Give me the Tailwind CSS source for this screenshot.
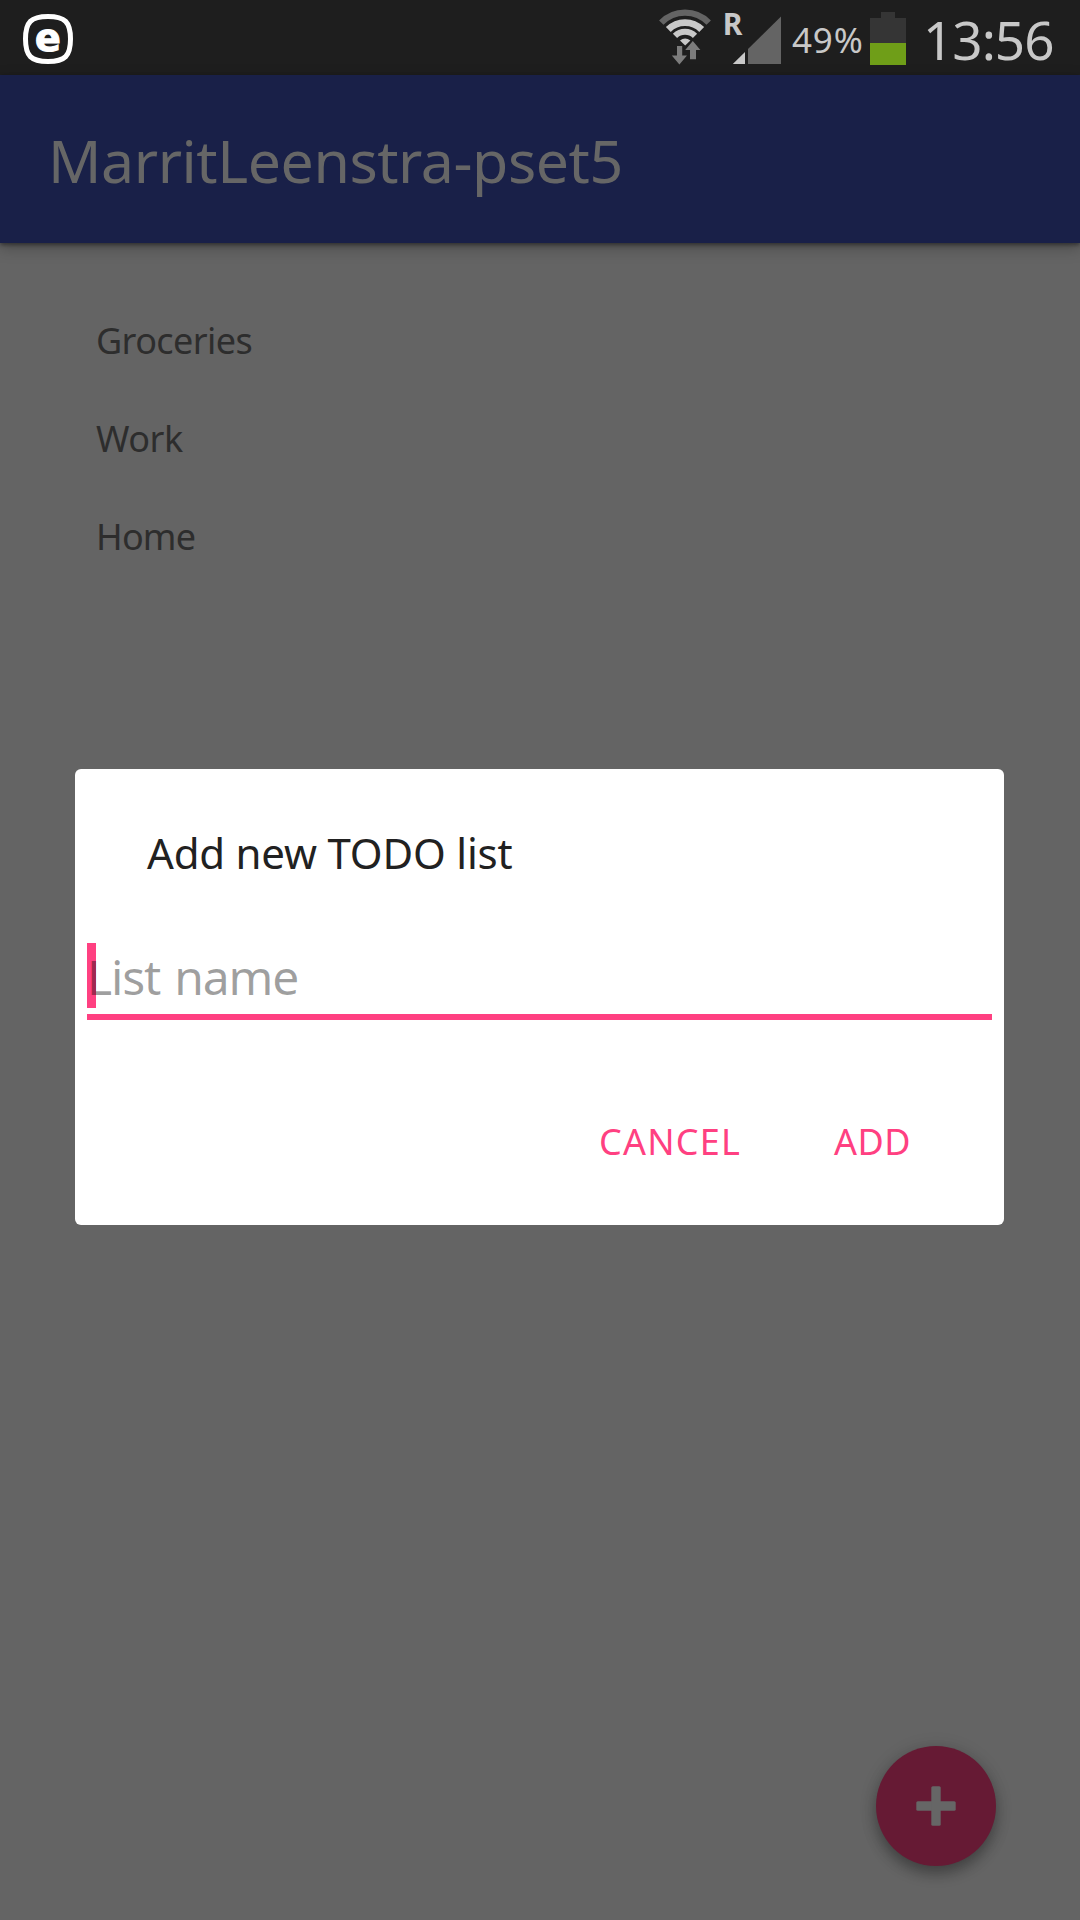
<!DOCTYPE html>
<html lang="en">
<head>
<meta charset="utf-8">
<title>MarritLeenstra-pset5</title>
<script src="https://cdn.jsdelivr.net/npm/@tailwindcss/browser@4"></script>
</head>
<body class="bg-[#646464] font-['Noto_Sans',sans-serif]">
<div class="relative flex h-[1920px] w-[1080px] flex-col overflow-hidden bg-[#646464]">

  <!-- Status bar -->
  <header class="flex h-[75px] shrink-0 items-start bg-[#1e1e1e] text-[#c8c8c8]">
    <svg class="ml-[23px] mt-[14px] h-[50px] w-[50px]" viewBox="0 0 50 50">
      <path d="M25 2.500C42 2.500 47.500 8 47.500 25S42 47.500 25 47.500 2.500 42 2.500 25 8 2.500 25 2.500Z" fill="none" stroke="#fff" stroke-width="5"/>
      <text x="24.800" y="36.800" text-anchor="middle" font-family="DejaVu Sans" font-weight="bold" font-size="38" fill="#fff" stroke="#fff" stroke-width="1.200">e</text>
    </svg>
    <svg class="ml-[583px] h-[75px] w-[130px]" viewBox="656 0 130 75">
      <!-- Wi-Fi arcs around (685, 46) -->
      <g fill="none">
        <path d="M661.300 22.700A33 33 0 0 1 708.700 22.700" stroke="#646464" stroke-width="6.200"/>
        <path d="M668.300 29.500A23.500 23.500 0 0 1 701.700 29.500" stroke="#c8c8c8" stroke-width="6.800"/>
        <path d="M675 35.900A14.200 14.200 0 0 1 695 35.900" stroke="#c8c8c8" stroke-width="6"/>
      </g>
      <path d="M680 40.500Q685 36.400 690.400 40.500L685.200 45.600Z" fill="#c8c8c8"/>
      <path d="M677 46h5.200v9.500h4.800L679.400 64.500 671.800 55.500H677Z" fill="#7c7c7c"/>
      <path d="M690 59.200V50h-4.800L692.800 41 700.400 50H696v9.200Z" fill="#7c7c7c"/>
      <text x="722.800" y="34.800" font-family="Noto Sans" font-weight="bold" font-size="30" fill="#c8c8c8">R</text>
      <path d="M745 52v12h-12.200Z" fill="#c8c8c8"/>
      <path d="M781 16.500V64h-33V49Z" fill="#646464"/>
    </svg>
    <span class="ml-[6px] mt-[2px] w-[78px] text-[35px] leading-[75px] tracking-[0.8px]">49%</span>
    <svg class="mt-[12px] h-[53px] w-[36px]" viewBox="0 0 36 53">
      <path d="M11 0h14v6h11v25H0V6h11Z" fill="#353535"/>
      <path d="M0 31h36v22H0Z" fill="#6f9e18"/>
    </svg>
    <span class="ml-[17px] mt-[2px] text-[53px] leading-[75px] tracking-[-1px]">13:56</span>
  </header>

  <!-- App bar -->
  <div class="flex h-[168px] shrink-0 items-center bg-[#192048] pl-12 shadow-[0_2px_4px_rgba(0,0,0,0.4),0_5px_14px_rgba(0,0,0,0.25)]">
    <h1 class="pt-[2px] text-[59px] leading-none tracking-[-0.44px] text-[#666666]">MarritLeenstra-pset5</h1>
  </div>

  <ul class="flex flex-col pl-24 pt-[49px] text-[36px] leading-[98px] text-[#2d2d2d]">
    <li class="tracking-[-0.6px]">Groceries</li>
    <li class="tracking-[-0.5px]">Work</li>
    <li class="tracking-[-0.8px]">Home</li>
  </ul>

  <!-- Floating action button -->
  <button class="absolute bottom-[54px] right-[84px] flex size-[120px] items-center justify-center rounded-full bg-[#661a34] shadow-[0_8px_14px_rgba(0,0,0,0.28),0_2px_18px_rgba(0,0,0,0.14)]">
    <svg class="size-10" viewBox="0 0 40 40" fill="#666666">
      <rect x="0.300" y="15.300" width="39.400" height="9.400" rx="1.500"/>
      <rect x="15.300" y="0.300" width="9.400" height="39.400" rx="1.500"/>
    </svg>
  </button>

  <!-- Dialog -->
  <section class="absolute left-[75px] top-[769px] flex h-[456px] w-[929px] flex-col rounded-[6px] bg-white px-3">
    <h2 class="mt-[54px] pl-[60px] text-[42px] leading-[60px] tracking-[-0.2px] text-[#212121]">Add new TODO list</h2>
    <div class="mt-[60px] flex h-[77px] items-start border-b-[6px] border-[#ff4081]">
      <span class="-mr-[9px] h-[65px] w-[9px] bg-[#ff4081]"></span>
      <span class="relative pt-px text-[48px] leading-[65px] tracking-[-1.2px] text-black/38 [word-spacing:3px]">List name</span>
    </div>
    <div class="mt-[87px] flex text-[36px] leading-[70px] text-[#ff4081]">
      <button class="ml-[512px] w-[235px] text-left tracking-[1.2px]">CANCEL</button>
      <button class="text-left tracking-[0.5px]">ADD</button>
    </div>
  </section>
</div>
</body>
</html>
